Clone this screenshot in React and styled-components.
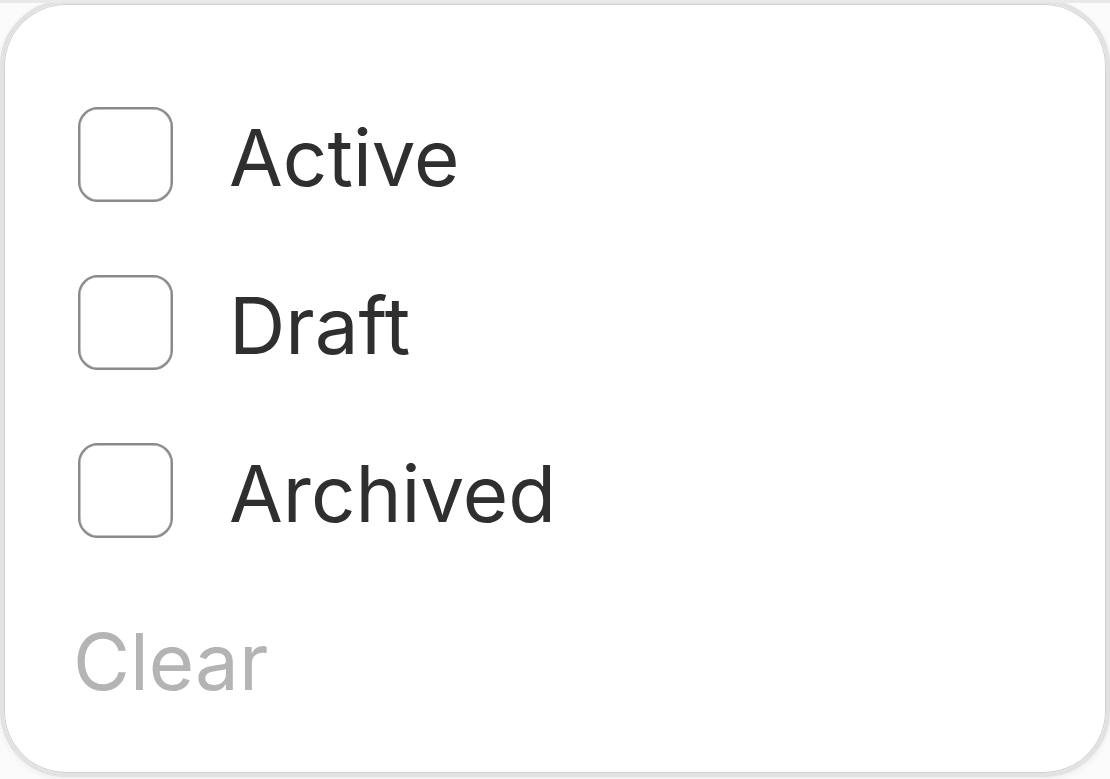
import styled, { createGlobalStyle } from "styled-components";
import { useState } from "react";

const GlobalStyle = createGlobalStyle`
  html, body {
    margin: 0;
    padding: 0;
    background: #ffffff;
    font-family: Inter, "Liberation Sans", sans-serif;
  }
`;

const Page = styled.div`
  width: 1110px;
  height: 779px;
  box-sizing: border-box;
  border-top: 3px solid #e9e9e9;
  overflow: hidden;
  background: #fbfbfb;
`;

const Popover = styled.div`
  box-sizing: border-box;
  width: 1110px;
  height: 777px;
  margin-top: -3px;
  background: #ffffff;
  border: 4px solid #e2e2e2;
  border-radius: 66px;
  box-shadow: inset 0 0 0 1px #d1d1d1, 0 2px 6px rgba(0, 0, 0, 0.06);
  padding: 66px 0 0 74px;
  display: flex;
  flex-direction: column;
`;

const List = styled.div`
  display: flex;
  flex-direction: column;
`;

const Row = styled.label`
  display: flex;
  align-items: center;
  gap: 56px;
  height: 168px;
  cursor: pointer;
`;

const Box = styled.span`
  box-sizing: border-box;
  width: 95px;
  height: 95px;
  flex: none;
  border: 2px solid #8a8a8a;
  border-radius: 20px;
  background: ${(p) => (p.$checked ? "#333" : "#fff")};
  box-shadow: inset 0 0 0 0.5px #8a8a8a;
`;

const Label = styled.span`
  font-size: 78px;
  line-height: 100px;
  color: #2f2f2f;
  margin-top: 7px;
`;

const Clear = styled.button`
  align-self: flex-start;
  margin-top: 38px;
  margin-left: -5px;
  padding: 0;
  border: 0;
  background: none;
  font-family: inherit;
  font-size: 78px;
  line-height: 100px;
  color: #b4b4b4;
  cursor: pointer;
`;

const options = ["Active", "Draft", "Archived"];

export default function App() {
  const [checked, setChecked] = useState({});

  return (
    <>
      <GlobalStyle />
      <Page>
        <Popover>
          <List>
            {options.map((opt) => (
              <Row
                key={opt}
                onClick={() => setChecked((c) => ({ ...c, [opt]: !c[opt] }))}
              >
                <Box $checked={!!checked[opt]} />
                <Label>{opt}</Label>
              </Row>
            ))}
          </List>
          <Clear onClick={() => setChecked({})}>Clear</Clear>
        </Popover>
      </Page>
    </>
  );
}
